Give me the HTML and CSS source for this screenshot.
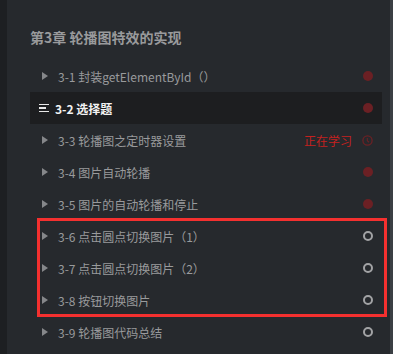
FILE: index.html
```html
<!DOCTYPE html>
<html lang="zh-CN">
<head>
  <meta charset="UTF-8" />
  <meta name="viewport" content="width=device-width, initial-scale=1.0"/>
  <title>第3章</title>
  <link rel="stylesheet" href="styles.css">
</head>
<body>
  <div class="page">
    <div class="side"></div>
    <div class="chapter">
      <h2 class="chapter-title">第3章 轮播图特效的实现</h2>
      <ul class="lessons">
        <li class="lesson"><span class="play"></span><span class="name">3-1 封装getElementById（）</span><span class="dot done"></span></li>
        <li class="lesson active"><span class="menu"><i></i><i></i><i></i></span><span class="name">3-2 选择题</span><span class="dot done"></span></li>
        <li class="lesson"><span class="play"></span><span class="name">3-3 轮播图之定时器设置</span><span class="status">正在学习</span>
          <svg class="clock" width="11" height="11" viewBox="0 0 11 11"><circle cx="5.5" cy="5.5" r="4.6" fill="none" stroke="#6b2125" stroke-width="1.3"/><path d="M5.3 3v2.8l1.8 1.4" fill="none" stroke="#6b2125" stroke-width="1.1"/></svg></li>
        <li class="lesson"><span class="play"></span><span class="name">3-4 图片自动轮播</span><span class="dot done"></span></li>
        <li class="lesson"><span class="play"></span><span class="name">3-5 图片的自动轮播和停止</span><span class="dot done"></span></li>
        <li class="lesson"><span class="play"></span><span class="name">3-6 点击圆点切换图片（1）</span><span class="dot todo"></span></li>
        <li class="lesson"><span class="play"></span><span class="name">3-7 点击圆点切换图片（2）</span><span class="dot todo"></span></li>
        <li class="lesson"><span class="play"></span><span class="name">3-8 按钮切换图片</span><span class="dot todo"></span></li>
        <li class="lesson"><span class="play"></span><span class="name">3-9 轮播图代码总结</span><span class="dot todo"></span></li>
      </ul>
      <div class="mark"></div>
    </div>
    <div class="scrollbar"></div>
  </div>
</body>
</html>
```

FILE: styles.css
```css
:root {
  --bg-color: #26292d;
  --side-bg: #1d1f22;
  --active-bg: #1d1e20;
  --text-color: #999a9c;
  --done-color: #6b2024;
  --todo-color: #a2a3a5;
  --font-family: "Noto Sans CJK SC", "Noto Sans", sans-serif;
}

* {
  box-sizing: border-box;
}

html, body {
  margin: 0;
  padding: 0;
  height: 100%;
  background-color: var(--bg-color);
  font-family: var(--font-family);
  overflow: hidden;
}

.page {
  display: flex;
  height: 354px;
}

.side {
  width: 7px;
  background-color: var(--side-bg);
}

.scrollbar {
  width: 3px;
  background-color: #3b3f44;
}

.chapter {
  flex: 1;
  position: relative;
  padding: 24px 8px 0 23px;
}

.chapter-title {
  margin: 0 0 10px;
  height: 26px;
  line-height: 26px;
  font-size: 14px;
  font-weight: 700;
  color: var(--text-color);
}

.lessons {
  list-style: none;
  margin: 0;
  padding: 0;
}

.lesson {
  display: flex;
  align-items: center;
  height: 32px;
  padding: 0 9px 0 12px;
  font-size: 12px;
  color: var(--text-color);
}

.lesson.active {
  background-color: var(--active-bg);
  color: #f2f2f2;
  font-weight: 700;
}

.play {
  width: 0;
  height: 0;
  border-top: 4px solid transparent;
  border-bottom: 4px solid transparent;
  border-left: 6px solid #85878a;
  margin-right: 10px;
}

.menu {
  display: flex;
  flex-direction: column;
  gap: 2px;
  width: 10px;
  margin: 0 6px 0 -3px;
}

.menu i {
  display: block;
  height: 1.5px;
  background-color: #e8e8e8;
}

.menu i:nth-child(2) {
  width: 7px;
}

.menu i:nth-child(3) {
  width: 10px;
}

.name {
  flex: 1;
  white-space: nowrap;
}

.status {
  color: #c4211f;
  margin-right: 10px;
}

.dot {
  width: 10px;
  height: 10px;
  border-radius: 50%;
}

.dot.done {
  background-color: var(--done-color);
}

.dot.todo {
  border: 2px solid var(--todo-color);
}

.clock {
  display: block;
}

.mark {
  position: absolute;
  left: 30px;
  top: 218px;
  width: 350px;
  height: 99px;
  border: 3px solid #f4302f;
  pointer-events: none;
}
```
